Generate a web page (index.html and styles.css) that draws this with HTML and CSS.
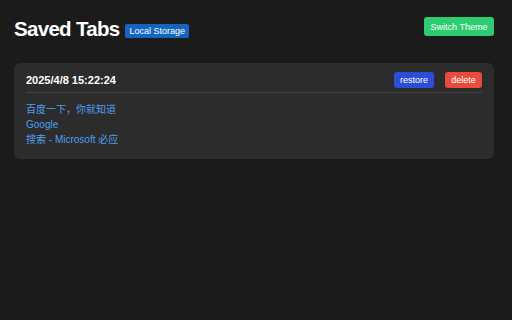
FILE: index.html
```html
<!DOCTYPE html>
<html lang="zh-CN">
<head>
  <meta charset="UTF-8">
  <meta name="viewport" content="width=device-width, initial-scale=1.0">
  <title>Saved Tabs</title>
  <link rel="stylesheet" href="styles.css">
</head>
<body>
  <!-- Header -->
  <div class="header">
    <div class="title">
      <h1>Saved Tabs</h1>
      <span class="badge">Local Storage</span>
    </div>
    <button class="theme-btn">Switch Theme</button>
  </div>

  <!-- Saved groups -->
  <div class="group">
    <div class="group-head">
      <span class="time">2025/4/8 15:22:24</span>
      <div class="actions">
        <button class="restore">restore</button>
        <button class="delete">delete</button>
      </div>
    </div>
    <div class="links">
      <a href="#">百度一下，你就知道</a>
      <a href="#">Google</a>
      <a href="#">搜索 - Microsoft 必应</a>
    </div>
  </div>
</body>
</html>
```

FILE: styles.css
```css
body {
  margin: 0;
  padding: 14px 18px 14px 14px;
  background: #1b1b1b;
  color: #fff;
  font-family: 'Liberation Sans', Arial, 'Noto Sans CJK SC', sans-serif;
}

/* Header */
.header {
  display: flex;
  justify-content: space-between;
  align-items: flex-start;
  height: 49px;
}

.title {
  display: flex;
  align-items: center;
  margin-top: 3px;
}

.title h1 {
  margin: 0;
  font-size: 20.5px;
  letter-spacing: -0.7px;
  font-weight: bold;
}

.badge {
  margin-left: 6px;
  margin-top: 4px;
  background: #1565c0;
  color: #fff;
  font-size: 9px;
  padding: 2px 4px;
  border-radius: 2px;
  line-height: 10px;
}

.theme-btn {
  margin-top: 3px;
  background: #2ecc71;
  color: #fff;
  border: none;
  border-radius: 3px;
  font-family: inherit;
  font-size: 9px;
  width: 70px;
  height: 19px;
  padding: 0;
}

/* Group card */
.group {
  background: #2c2c2c;
  border-radius: 6px;
  padding: 9px 12px 12px;
}

.group-head {
  display: flex;
  justify-content: space-between;
  align-items: center;
  padding-bottom: 4px;
  border-bottom: 1px solid #444;
}

.time {
  font-size: 11px;
  font-weight: bold;
}

.actions {
  display: flex;
  gap: 11px;
}

.actions button {
  border: none;
  border-radius: 3px;
  color: #fff;
  font-family: inherit;
  font-size: 9px;
  height: 16px;
  padding: 0;
}

.restore {
  background: #2b4fd4;
  width: 40px;
}

.delete {
  background: #e74c3c;
  width: 37px;
}

.links {
  display: flex;
  flex-direction: column;
  padding-top: 9px;
}

.links a {
  color: #4d9fef;
  text-decoration: none;
  font-size: 10px;
  line-height: 15px;
}
```
